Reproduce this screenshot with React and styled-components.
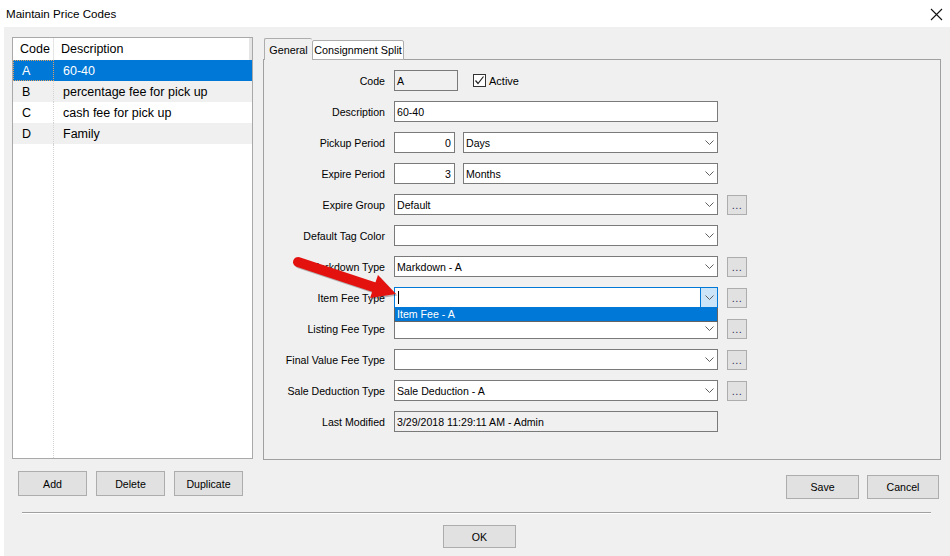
import styled, { createGlobalStyle, css } from "styled-components";

const GlobalStyle = createGlobalStyle`
  body {
    margin: 0;
    background: #ffffff;
    font-family: "Liberation Sans", Arial, sans-serif;
  }
`;

const codes = [
  { code: "A", desc: "60-40" },
  { code: "B", desc: "percentage fee for pick up" },
  { code: "C", desc: "cash fee for pick up" },
  { code: "D", desc: "Family" },
];

const Chevron = () => (
  <svg width="9" height="5" viewBox="0 0 9 5">
    <path d="M0.5 0.5 L4.5 4.5 L8.5 0.5" fill="none" stroke="#5f5f5f" strokeWidth="1" />
  </svg>
);

const Combo = ({ value, focused }) => (
  <ComboBox $focused={focused}>
    {focused ? <Caret /> : <span>{value}</span>}
    <ComboArrow $focused={focused}>
      <Chevron />
    </ComboArrow>
  </ComboBox>
);

const App = () => {
  return (
    <Window>
      <GlobalStyle />
      <TitleBar>
        <span>Maintain Price Codes</span>
        <svg width="13" height="13" viewBox="0 0 13 13">
          <path d="M1 1 L12 12 M12 1 L1 12" stroke="#111" strokeWidth="1.1" />
        </svg>
      </TitleBar>
      <Body>
        <Main>
          <ListBox>
            <ListRow $header>
              <CodeCell>Code</CodeCell>
              <DescCell>Description</DescCell>
            </ListRow>
            {codes.map((c, i) => (
              <ListRow key={c.code} $selected={i === 0} $alt={i % 2 === 1}>
                <CodeCell $focus={i === 0} $item>{c.code}</CodeCell>
                <DescCell $item>{c.desc}</DescCell>
              </ListRow>
            ))}
            <ListFill>
              <CodeCell />
            </ListFill>
          </ListBox>

          <TabArea>
            <TabStrip>
              <Tab $active>General</Tab>
              <Tab>Consignment Split</Tab>
            </TabStrip>
            <Panel>
              <Form>
                <Label>Code</Label>
                <Inline>
                  <TextBox $w={64} $readOnly>A</TextBox>
                  <Check>
                    <CheckBox>
                      <svg width="11" height="11" viewBox="0 0 11 11">
                        <path d="M1.5 5.5 L4 8.5 L9.5 1.5" fill="none" stroke="#222" strokeWidth="1.2" />
                      </svg>
                    </CheckBox>
                    Active
                  </Check>
                </Inline>
                <span />

                <Label>Description</Label>
                <TextBox>60-40</TextBox>
                <span />

                <Label>Pickup Period</Label>
                <Inline $gap={8}>
                  <TextBox $w={61} $right>0</TextBox>
                  <Combo value="Days" />
                </Inline>
                <span />

                <Label>Expire Period</Label>
                <Inline $gap={8}>
                  <TextBox $w={61} $right>3</TextBox>
                  <Combo value="Months" />
                </Inline>
                <span />

                <Label>Expire Group</Label>
                <Combo value="Default" />
                <DotsButton>...</DotsButton>

                <Label>Default Tag Color</Label>
                <Combo value="" />
                <span />

                <Label>Markdown Type</Label>
                <Combo value="Markdown - A" />
                <DotsButton>...</DotsButton>

                <Label>Item Fee Type</Label>
                <ComboWrap>
                  <Combo value="" focused />
                  <DropList>
                    <DropItem>Item Fee - A</DropItem>
                  </DropList>
                </ComboWrap>
                <DotsButton>...</DotsButton>

                <Label>Listing Fee Type</Label>
                <Combo value="" />
                <DotsButton>...</DotsButton>

                <Label>Final Value Fee Type</Label>
                <Combo value="" />
                <DotsButton>...</DotsButton>

                <Label>Sale Deduction Type</Label>
                <Combo value="Sale Deduction - A" />
                <DotsButton>...</DotsButton>

                <Label>Last Modified</Label>
                <TextBox $readOnly>3/29/2018 11:29:11 AM - Admin</TextBox>
                <span />
              </Form>
            </Panel>
          </TabArea>
        </Main>

        <ButtonBar>
          <ButtonGroup>
            <Button>Add</Button>
            <Button>Delete</Button>
            <Button>Duplicate</Button>
          </ButtonGroup>
          <ButtonGroup $right>
            <Button $w={73} $h={24}>Save</Button>
            <Button $w={72} $h={24}>Cancel</Button>
          </ButtonGroup>
        </ButtonBar>
        <Separator />
        <OkRow>
          <Button $w={73} $h={23}>OK</Button>
        </OkRow>
      </Body>

      <Annotation width="120" height="60" viewBox="0 0 120 60">
        <g transform="translate(1.5 1.5)" opacity="0.25">
          <line x1="8" y1="12" x2="85" y2="37.5" stroke="#000" strokeWidth="10" strokeLinecap="round" />
          <polygon points="80,48 88,25 106,44" fill="#000" />
        </g>
        <line x1="8" y1="12" x2="85" y2="37.5" stroke="#e3120f" strokeWidth="10" strokeLinecap="round" />
        <polygon points="80,48 88,25 106,44" fill="#e3120f" />
      </Annotation>
    </Window>
  );
};

export default App;

const Window = styled.div`
  position: relative;
  width: 950px;
  height: 556px;
  background: #ffffff;
  overflow: hidden;
`;

const TitleBar = styled.div`
  height: 27px;
  display: flex;
  align-items: center;
  justify-content: space-between;
  padding: 0 7px 0 6px;
  font-size: 11.6px;
  color: #000;

  svg {
    margin-top: 2px;
  }
`;

const Body = styled.div`
  margin-left: 4px;
  height: 529px;
  background: #f0f0f0;
  padding: 10px 0 0 8px;
  box-sizing: border-box;
`;

const Main = styled.div`
  display: flex;
  gap: 10px;
  height: 423px;
`;

const ListBox = styled.div`
  width: 241px;
  height: 422px;
  box-sizing: border-box;
  border: 1px solid #a9a9a9;
  background: #fff;
  display: flex;
  flex-direction: column;
  font-size: 12.5px;
`;

const ListRow = styled.div`
  display: flex;
  height: 21px;
  flex-shrink: 0;
  align-items: stretch;
  background: ${(p) => (p.$selected ? "#0078d7" : p.$alt ? "#f0f0f0" : "#fff")};
  color: ${(p) => (p.$selected ? "#fff" : "#000")};
  ${(p) =>
    p.$header &&
    css`
      height: 22px;
      span {
        border-right-style: solid;
        border-right-color: #e5e5e5;
      }
    `}
`;

const ListFill = styled.div`
  flex: 1;
  display: flex;
`;

const CodeCell = styled.span`
  width: 41px;
  box-sizing: border-box;
  padding-left: ${(p) => (p.$item ? 9 : 7)}px;
  display: flex;
  align-items: center;
  border-right: 1px dotted #d4d4d4;
  ${(p) =>
    p.$focus &&
    css`
      outline: 1px dotted #e0a060;
      outline-offset: -1px;
    `}
`;

const DescCell = styled.span`
  flex: 1;
  padding-left: ${(p) => (p.$item ? 9 : 7)}px;
  display: flex;
  align-items: center;
  white-space: nowrap;
`;

const TabArea = styled.div`
  width: 678px;
  display: flex;
  flex-direction: column;
  padding-top: 1px;
`;

const TabStrip = styled.div`
  display: flex;
  align-items: flex-end;
  height: 22px;
  padding-left: 1px;
  position: relative;
  z-index: 1;
  margin-bottom: -1px;
`;

const Tab = styled.div`
  font-size: 10.8px;
  white-space: nowrap;
  box-sizing: border-box;
  border: 1px solid #adadad;
  border-bottom: none;
  border-radius: 2px 2px 0 0;
  display: flex;
  align-items: center;
  justify-content: center;
  ${(p) =>
    p.$active
      ? css`
          height: 22px;
          width: 48px;
          background: #f0f0f0;
          border-right: none;
        `
      : css`
          height: 20px;
          width: 92px;
          background: #ffffff;
          border-bottom: 1px solid #adadad;
        `}
`;

const Panel = styled.div`
  flex: 1;
  border: 1px solid #a0a0a0;
  background: #f0f0f0;
  padding-top: 10px;
`;

const Form = styled.div`
  display: grid;
  grid-template-columns: 121px 324px 20px;
  grid-auto-rows: 21px;
  column-gap: 9px;
  row-gap: 10px;
  font-size: 10.6px;
  color: #000;
`;

const Label = styled.div`
  text-align: right;
  align-self: center;
  white-space: nowrap;
`;

const Inline = styled.div`
  display: flex;
  align-items: center;
  gap: ${(p) => p.$gap ?? 15}px;
`;

const TextBox = styled.div`
  box-sizing: border-box;
  width: ${(p) => (p.$w ? `${p.$w}px` : "100%")};
  flex-shrink: 0;
  height: 21px;
  border: 1px solid #7a7a7a;
  background: ${(p) => (p.$readOnly ? "#f0f0f0" : "#fff")};
  display: flex;
  align-items: center;
  justify-content: ${(p) => (p.$right ? "flex-end" : "flex-start")};
  padding: 0 3px 0 2px;
  white-space: nowrap;
`;

const Check = styled.label`
  display: flex;
  align-items: center;
  gap: 3px;
  font-size: 11px;
`;

const CheckBox = styled.span`
  width: 13px;
  height: 13px;
  box-sizing: border-box;
  border: 1px solid #333;
  background: #fff;
  display: flex;
  align-items: center;
  justify-content: center;
`;

const ComboWrap = styled.div`
  position: relative;
`;

const ComboBox = styled.div`
  flex: 1;
  height: 21px;
  box-sizing: border-box;
  border: 1px solid ${(p) => (p.$focused ? "#0078d7" : "#7a7a7a")};
  background: #fff;
  display: flex;
  align-items: center;
  padding-left: 2px;
  white-space: nowrap;

  span {
    flex: 1;
  }
`;

const ComboArrow = styled.div`
  margin-left: auto;
  width: 16px;
  height: 100%;
  display: flex;
  align-items: center;
  justify-content: center;
  ${(p) =>
    p.$focused &&
    css`
      background: #cce4f7;
      border-left: 1px solid #0078d7;
    `}
`;

const Caret = styled.i`
  width: 1px;
  height: 13px;
  background: #000;
  margin-left: 1px;
`;

const DropList = styled.div`
  position: absolute;
  left: 0;
  top: 21px;
  width: 100%;
  height: 14px;
  box-sizing: border-box;
  border: 1px solid #646464;
  border-top: none;
  background: #0078d7;
  z-index: 2;
`;

const DropItem = styled.div`
  color: #fff;
  font-size: 10.6px;
  line-height: 13px;
  padding-left: 2px;
`;

const DotsButton = styled.div`
  height: 20px;
  margin-top: 1px;
  box-sizing: border-box;
  border: 1px solid #adadad;
  background: #e1e1e1;
  font-size: 11px;
  display: flex;
  justify-content: center;
  align-items: flex-end;
  padding-bottom: 3px;
  color: #303060;
  letter-spacing: 0.5px;
`;

const ButtonBar = styled.div`
  display: flex;
  justify-content: space-between;
  align-items: flex-start;
  margin-top: 11px;
  padding-left: 6px;
  width: 921px;
`;

const ButtonGroup = styled.div`
  display: flex;
  gap: ${(p) => (p.$right ? 8 : 9)}px;
  margin-top: ${(p) => (p.$right ? 4 : 0)}px;
`;

const Button = styled.div`
  width: ${(p) => p.$w ?? 69}px;
  height: ${(p) => p.$h ?? 25}px;
  box-sizing: border-box;
  border: 1px solid #adadad;
  background: #e1e1e1;
  font-size: 10.6px;
  display: flex;
  align-items: center;
  justify-content: center;
`;

const Separator = styled.div`
  margin: 13px 0 0 10px;
  width: 909px;
  height: 1px;
  background: #a0a0a0;
  border-bottom: 1px solid #ffffff;
`;

const OkRow = styled.div`
  display: flex;
  padding-left: 431px;
  margin-top: 11px;
`;

const Annotation = styled.svg`
  position: absolute;
  left: 290px;
  top: 250px;
  pointer-events: none;
`;
